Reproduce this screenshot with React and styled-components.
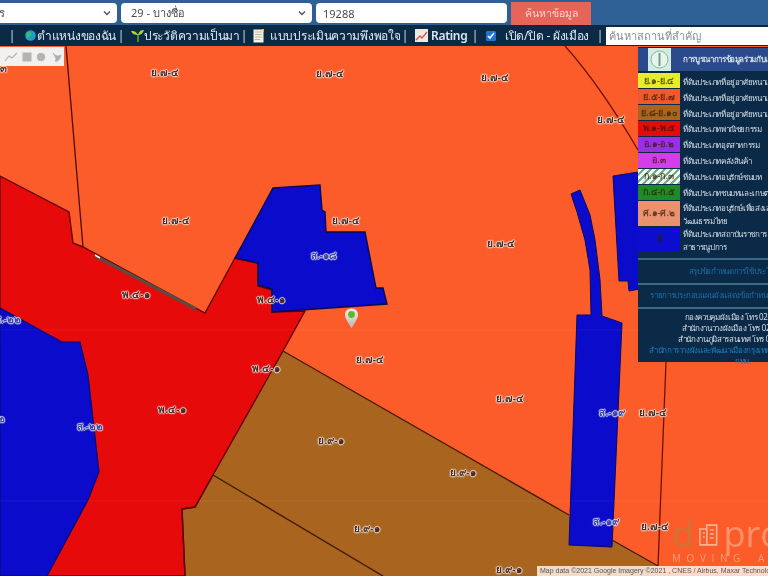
import React from "react";
import styled, { createGlobalStyle } from "styled-components";

const THAI = `"Noto Sans", "Liberation Sans", "DejaVu Sans", sans-serif`;

const Global = createGlobalStyle`
  html, body { margin: 0; padding: 0; width: 768px; height: 576px; overflow: hidden; background: #0a2a45; }
  * { box-sizing: border-box; }
`;

const Page = styled.div`
  width: 768px;
  height: 576px;
  overflow: hidden;
  display: flex;
  flex-direction: column;
  font-family: ${THAI};
  filter: blur(0.45px);
`;

const SearchBar = styled.div`
  height: 25px;
  flex: none;
  background: #2f6095;
  display: flex;
  align-items: center;
  gap: 4px;
  padding-top: 1px;
`;

const Select = styled.div`
  flex: none;
  width: ${(p) => p.$w}px;
  margin-left: ${(p) => p.$ml || 0}px;
  height: 20px;
  background: #fff;
  border-radius: 4px;
  display: flex;
  align-items: center;
  justify-content: space-between;
  padding: 0 6px 0 ${(p) => p.$pl || 10}px;
  font-size: 11px;
  color: #4a4a4a;
  white-space: nowrap;
  overflow: hidden;
`;

const Field = styled(Select)`
  padding-left: 7px;
`;

const SearchButton = styled.div`
  flex: none;
  width: 80px;
  height: 23px;
  background: #e7645b;
  color: #f8d6d0;
  font-size: 10.500px;
  display: flex;
  align-items: center;
  justify-content: center;
`;

const ToolBar = styled.div`
  height: 21px;
  flex: none;
  background: #0a2a45;
  display: flex;
  align-items: center;
  color: #dce7f1;
  font-size: 12px;
  letter-spacing: -0.3px;
  white-space: nowrap;
  position: relative;
  z-index: 2;
`;

const ToolItem = styled.span`
  flex: none;
  width: ${(p) => p.$w}px;
  display: flex;
  align-items: center;
  padding-left: ${(p) => p.$pad || 0}px;
  gap: ${(p) => p.$gap || 0}px;
  font-weight: ${(p) => (p.$bold ? 600 : 400)};
  overflow: hidden;
`;

const Pipe = styled.span`
  flex: none;
  width: 8px;
  text-align: center;
  color: #cfdbe6;
`;

const Check = styled.input`
  margin: 0 9px 0 0;
  width: 10px;
  height: 10px;
  accent-color: #1c72d8;
`;

const PlaceSearch = styled.div`
  flex: none;
  width: 170px;
  height: 18px;
  margin-left: 2px;
  background: #fff;
  color: #8a8f96;
  font-size: 11px;
  letter-spacing: 0;
  padding: 0 0 0 3px;
  display: flex;
  align-items: center;
`;

const Map = styled.div`
  flex: 1;
  position: relative;
  overflow: hidden;
  background: #fb5c2a;
`;

const MapArt = styled.svg`
  display: block;
  width: 768px;
  height: 530px;
`;

const ZoneLabel = styled.span`
  position: absolute;
  left: ${(p) => p.$x}px;
  top: ${(p) => p.$y - 46}px;
  transform: translate(-50%, -50%);
  font-size: 10px;
  font-weight: 700;
  line-height: 12px;
  white-space: nowrap;
  color: ${(p) => (p.$on === "blue" ? "#3b46a8" : "#4a2a20")};
  text-shadow: 0 0 1px rgba(255, 255, 255, 0.8), 1px 0 1px rgba(255, 255, 255, 0.7),
    -1px 0 1px rgba(255, 255, 255, 0.7), 0 1px 1px rgba(255, 255, 255, 0.7),
    0 -1px 1px rgba(255, 255, 255, 0.7);
`;

const Pin = styled.svg`
  position: absolute;
  left: 344px;
  top: 262px;
  width: 15px;
  height: 21px;
`;

const MapTools = styled.div`
  position: absolute;
  left: 0;
  top: 1px;
  width: 64px;
  height: 19px;
  background: #f3f1ef;
  display: flex;
  align-items: center;
  padding-left: 3px;
`;

const Attribution = styled.div`
  position: absolute;
  left: 537px;
  bottom: 0;
  right: 0;
  height: 10px;
  background: rgba(255, 240, 232, 0.85);
  color: #555;
  font: 7px/10px "Liberation Sans", sans-serif;
  padding-left: 3px;
  white-space: nowrap;
  overflow: hidden;
`;

const Watermark = styled.div`
  position: absolute;
  left: 672px;
  top: 471px;
  width: 110px;
  display: flex;
  flex-direction: column;
  pointer-events: none;
  white-space: nowrap;
`;

const WatermarkWord = styled.div`
  font: 400 36px/34px "Open Sans", sans-serif;
  color: rgba(255, 190, 160, 0.55);
  display: flex;
  align-items: center;
  letter-spacing: 0;
`;

const WatermarkDot = styled.span`
  color: rgba(190, 125, 60, 0.7);
`;

const WatermarkTag = styled.div`
  font: 400 10px/12px "Open Sans", sans-serif;
  letter-spacing: 5.6px;
  word-spacing: 4px;
  color: rgba(255, 200, 175, 0.6);
  margin-top: 1px;
`;

const Legend = styled.aside`
  position: absolute;
  left: 638px;
  top: 1px;
  width: 210px;
  height: 315px;
  background: #0b2a47;
  display: flex;
  flex-direction: column;
  padding-top: 1px;
  color: #d5dfe8;
  font-size: 8px;
  letter-spacing: -0.35px;
`;

const LegendHead = styled.div`
  display: flex;
  height: 23px;
  background: #2a4a8c;
  margin-bottom: 2px;
  align-items: center;
  flex: none;
`;

const LogoCell = styled.div`
  width: 42px;
  height: 23px;
  flex: none;
  display: flex;
  justify-content: center;
`;

const HeadText = styled.span`
  padding-left: 3px;
  font-weight: 600;
  white-space: nowrap;
`;

const LegendRow = styled.div`
  display: flex;
  height: ${(p) => p.$h}px;
  flex: none;
  align-items: stretch;
`;

const Swatch = styled.div`
  width: 42px;
  flex: none;
  background: ${(p) => p.$bg};
  color: rgba(50, 25, 0, 0.72);
  font-size: 9px;
  font-weight: 600;
  letter-spacing: 0;
  display: flex;
  align-items: center;
  justify-content: center;
  white-space: nowrap;
  margin-bottom: 1px;
  overflow: hidden;
`;

const RowText = styled.div`
  padding-left: 3px;
  display: flex;
  align-items: center;
  line-height: 13px;
  white-space: pre;
`;

const LegendLink = styled.div`
  border-top: 2px solid #3d6a86;
  height: ${(p) => p.$h}px;
  flex: none;
  display: flex;
  align-items: center;
  justify-content: center;
  color: #1b6ea8;
  white-space: nowrap;
  margin-top: ${(p) => p.$mt || 0}px;
`;

const Contact = styled.div`
  border-top: 2px solid #3d6a86;
  padding-top: 2px;
  text-align: center;
  line-height: 11px;
  font-size: 8px;
  white-space: nowrap;
`;

const ContactLink = styled.span`
  color: #1b7fc0;
`;

const Chevron = () => (
  <svg width="8" height="8" viewBox="0 0 8 8" fill="none" stroke="#555" strokeWidth="1.4">
    <path d="M1 2.5l3 3 3-3" />
  </svg>
);

const Globe = () => (
  <svg width="11" height="11" viewBox="0 0 11 11">
    <circle cx="5.5" cy="5.5" r="5.3" fill="#1e9fc4" />
    <path d="M2 3c2-2 4-1 4 1s-3 2-3 4-2-3-1-5z" fill="#3fbf63" />
  </svg>
);

const Sprout = () => (
  <svg width="13" height="15" viewBox="0 0 13 15" fill="none">
    <path d="M7 14V6" stroke="#8a9c3a" strokeWidth="1.4" />
    <path d="M7 7C5 3 3 3 0 3c1 3 4 4 7 4zM7 7c1-4 3-5 6-5-1 3-3 5-6 5z" fill="#a8d43a" />
  </svg>
);

const Doc = () => (
  <svg width="12" height="14" viewBox="0 0 12 14">
    <rect x="0.5" y="0.5" width="10" height="13" fill="#f4f1e2" />
    <path d="M2 3h7M2 5.5h7M2 8h7M2 10.5h5" stroke="#b8b8a8" />
    <path d="M8 0h3v3z" fill="#e7c24a" />
  </svg>
);

const ChartIcon = () => (
  <svg width="13" height="13" viewBox="0 0 13 13" fill="none">
    <rect width="13" height="13" fill="#ece8e4" />
    <path d="M1 11l4-4 2 2 5-6" stroke="#d8584a" strokeWidth="1.4" />
  </svg>
);

const zones = [
  ["ย.๗-๔", 165, 72], ["ย.๗-๔", 330, 73], ["ย.๗-๔", 495, 77], ["ย.๗-๔", 611, 119],
  ["ย.๗-๔", 176, 220], ["ย.๗-๔", 346, 220], ["ย.๗-๔", 501, 243], ["ย.๗-๔", 370, 359],
  ["ย.๗-๔", 510, 398], ["ย.๗-๔", 653, 412], ["ย.๗-๔", 655, 526],
  ["ย.๙-๑", 331, 440], ["ย.๙-๑", 463, 472], ["ย.๙-๑", 367, 528], ["ย.๙-๑", 509, 569],
  ["พ.๔-๑", 136, 294], ["พ.๔-๑", 271, 299], ["พ.๔-๑", 266, 368], ["พ.๔-๑", 172, 409],
  ["ส.-๑๘", 324, 255, "blue"], ["ส.-๒๒", 90, 426, "blue"], ["ส.-๒๒", 8, 319, "blue"],
  ["๒๒", -2, 418, "blue"], ["ส.-๑๙", 612, 412, "blue"], ["ส.-๑๙", 606, 521, "blue"],
  ["๓", 3, 68],
];

const legendRows = [
  ["ย.๑-ย.๔", "#e6ee2c", "ที่ดินประเภทที่อยู่อาศัยหนาแน่นน้อย", 16],
  ["ย.๕-ย.๗", "#f0592a", "ที่ดินประเภทที่อยู่อาศัยหนาแน่นปานกลาง", 16],
  ["ย.๘-ย.๑๐", "#a9651f", "ที่ดินประเภทที่อยู่อาศัยหนาแน่นมาก", 16],
  ["พ.๑-พ.๕", "#e30b0b", "ที่ดินประเภทพาณิชยกรรม", 15.5],
  ["อ.๑-อ.๒", "#9a2fe8", "ที่ดินประเภทอุตสาหกรรม", 16],
  ["อ.๓", "#d23fe6", "ที่ดินประเภทคลังสินค้า", 16],
  ["ก.๑-ก.๓", "repeating-linear-gradient(135deg,#f2f5f0 0 3px,#6fae8c 3px 5px)", "ที่ดินประเภทอนุรักษ์ชนบท", 16.5],
  ["ก.๔-ก.๕", "#1f8a2a", "ที่ดินประเภทชนบทและเกษตรกรรม", 15.5],
  ["ศ.๑-ศ.๒", "#ea9270", "ที่ดินประเภทอนุรักษ์เพื่อส่งเสริม\nวัฒนธรรมไทย", 26],
  ["ส", "#0d0dd0", "ที่ดินประเภทสถาบันราชการ\nสาธารณูปการ", 26],
];

export default function App() {
  return (
    <Page>
      <Global />
      <SearchBar>
        <Select $w={194} $ml={-77} $pl={42}>
          <span>พระนคร</span>
          <Chevron />
        </Select>
        <Select $w={191}>
          <span>29 - บางซื่อ</span>
          <Chevron />
        </Select>
        <Field $w={191}>19288</Field>
        <SearchButton>ค้นหาข้อมูล</SearchButton>
      </SearchBar>
      <ToolBar>
        <ToolItem $w={8} />
        <Pipe>|</Pipe>
        <ToolItem $w={101} $pad={9} $gap={1}>
          <Globe />
          <span>ตำแหน่งของฉัน</span>
        </ToolItem>
        <Pipe>|</Pipe>
        <ToolItem $w={115} $pad={6}>
          <Sprout />
          <span>ประวัติความเป็นมา</span>
        </ToolItem>
        <Pipe>|</Pipe>
        <ToolItem $w={153} $pad={5} $gap={5}>
          <Doc />
          <span>แบบประเมินความพึงพอใจ</span>
        </ToolItem>
        <Pipe>|</Pipe>
        <ToolItem $w={62} $pad={6} $gap={3} $bold>
          <ChartIcon />
          <span>Rating</span>
        </ToolItem>
        <Pipe>|</Pipe>
        <ToolItem $w={117} $pad={7}>
          <Check type="checkbox" defaultChecked readOnly />
          <span>เปิด/ปิด - ผังเมือง</span>
        </ToolItem>
        <Pipe>|</Pipe>
        <PlaceSearch>ค้นหาสถานที่สำคัญ</PlaceSearch>
      </ToolBar>
      <Map>
        <MapArt viewBox="0 46 768 530">
          <rect x="0" y="46" width="768" height="530" fill="#fb5c2a" />
          <path d="M283 351L658 566V576H160V400z" fill="#a9651f" />
          <path d="M0 176L69 212 73 243 83 247 205 313 235 258 258 263 258 286 272 290 272 312 305 311 283 351 213 475 195 507 182 509 185 576H47L0 576z" fill="#e60a0a" stroke="#5e0606" strokeWidth="1.4" />
          <path d="M0 308L62 342 80 342 88 375 99 472 88 500 47 576H0z" fill="#0b0bcb" stroke="#0a0a70" strokeWidth="1.2" />
          <path d="M273 188L320 185 322 210 325 212 326 232 365 232 376 288 383 288 387 304 272 312 272 289 258 285 258 263 235 258z" fill="#0b0bcb" stroke="#0a0a50" strokeWidth="1.4" />
          <path d="M571 194L580 190 590 215 595 240 600 280 602 316 622 323 612 547 569 545 577 315 591 315 590 270 585 240 577 212z" fill="#0b0bcb" stroke="#0a0a60" strokeWidth="1" />
          <path d="M613 176L645 171V288L629 291 628 281 619 281z" fill="#0b0bcb" stroke="#0a0a60" strokeWidth="1" />
          <path d="M0 330H768M0 501H768" stroke="#fff" strokeWidth="1" opacity="0.05" />
          <path d="M66 46L83 247" stroke="#4a0d08" strokeWidth="1.3" fill="none" />
          <path d="M95 256L196 309" stroke="#5d4a40" strokeWidth="3.2" />
          <path d="M95 255L100 258" stroke="#eee" strokeWidth="1.5" />
          <path d="M565 46Q600 85 638 150" stroke="#6e1208" strokeWidth="1.3" fill="none" />
          <path d="M666 362L658 566" stroke="#6e1208" strokeWidth="1.3" />
          <path d="M283 351L569 515M612 540L658 566" stroke="#4a1a05" strokeWidth="1.4" fill="none" />
          <path d="M213 475L383 576" stroke="#3f1a05" strokeWidth="1.4" fill="none" />
          <path d="M213 475L195 507 182 509 185 576" stroke="#5e0606" strokeWidth="1.4" fill="none" />
        </MapArt>
        {zones.map(([text, x, y, on], i) => (
          <ZoneLabel key={i} $x={x} $y={y} $on={on}>
            {text}
          </ZoneLabel>
        ))}
        <Pin viewBox="0 0 15 21">
          <defs>
            <linearGradient id="pinShade" x1="0" y1="0" x2="0" y2="1">
              <stop offset="0" stopColor="#f4f2ee" />
              <stop offset="1" stopColor="#b8b2aa" />
            </linearGradient>
          </defs>
          <path d="M7.5 0.5C3.5 0.5 1 3.3 1 6.8c0 4 4 9 6.5 13.7C10 15.800 14 10.800 14 6.800c0-3.500-2.500-6.300-6.500-6.300z" fill="url(#pinShade)" />
          <circle cx="7.500" cy="6.500" r="3.400" fill="#5cb82e" />
        </Pin>
        <MapTools>
          <svg width="60" height="14" viewBox="0 0 60 14" fill="none" stroke="#b4b4b4">
            <path d="M2 11l4-5 3 2 5-5" strokeWidth="1.2" />
            <rect x="20" y="3" width="8" height="8" fill="#b4b4b4" />
            <circle cx="38" cy="7" r="3.800" fill="#b4b4b4" />
            <path d="M50 3c3 4 6 3 8 2-1 4-3 7-6 6 2-1 1-3-2-8z" fill="#a4b2be" />
          </svg>
        </MapTools>
        <Watermark>
          <WatermarkWord>
            <WatermarkDot>d</WatermarkDot>
            <svg width="30" height="30" viewBox="0 0 30 30" fill="none" stroke="rgba(255,205,180,.75)" strokeWidth="1.6">
              <path d="M6 10h7v16H6zM13 6h10v20H13zM9 14h2M9 18h2M16 11h4M16 15h4M16 19h4" />
            </svg>
            <span>pro</span>
          </WatermarkWord>
          <WatermarkTag>MOVING AS</WatermarkTag>
        </Watermark>
        <Attribution>Map data ©2021 Google Imagery ©2021 , CNES / Airbus, Maxar Technologies</Attribution>
        <Legend>
          <LegendHead>
            <LogoCell>
              <svg width="23" height="23" viewBox="0 0 23 23">
                <rect width="23" height="23" fill="#d4ebe0" />
                <circle cx="11.500" cy="11.500" r="8.500" fill="#e8f3ee" stroke="#7cb8a0" />
                <path d="M11.500 5v13" stroke="#6aa08c" strokeWidth="2" />
              </svg>
            </LogoCell>
            <HeadText>การบูรณาการข้อมูลร่วมกับแผนที่</HeadText>
          </LegendHead>
          {legendRows.map(([code, bg, text, h]) => (
            <LegendRow key={code} $h={h}>
              <Swatch $bg={bg}>{code}</Swatch>
              <RowText>{text}</RowText>
            </LegendRow>
          ))}
          <LegendLink $h={25} $mt={5}>สรุปข้อกำหนดการใช้ประโยชน์ที่ดิน</LegendLink>
          <LegendLink $h={24}>รายการประกอบแผนผังแสดงข้อกำหนดการใช้ประโยชน์ที่ดิน</LegendLink>
          <Contact>
            กองควบคุมผังเมือง โทร 02-225-7620
            <br />
            สำนักงานวางผังเมือง โทร 02-225-7621
            <br />
            สำนักงานภูมิสารสนเทศ โทร 02-225-7622
            <br />
            <ContactLink>สำนักการวางผังและพัฒนาเมืองกรุงเทพฯ กทม.</ContactLink> หรือ <ContactLink>GIS กทม.</ContactLink>
            <br />
            <ContactLink>กทม.</ContactLink>
          </Contact>
        </Legend>
      </Map>
    </Page>
  );
}
